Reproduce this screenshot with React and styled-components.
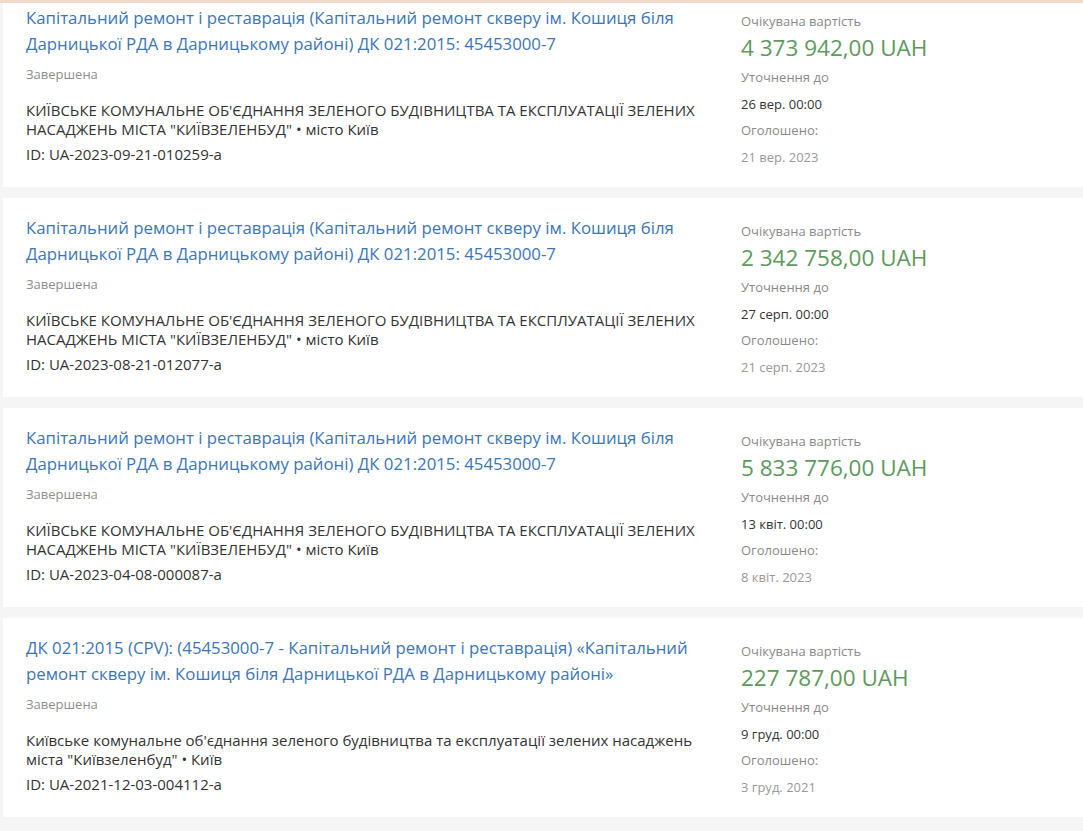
import React from "react";
import styled, { createGlobalStyle } from "styled-components";

const GlobalStyle = createGlobalStyle`
  html, body {
    margin: 0;
    padding: 0;
    background: #f5f5f5;
    font-family: "Open Sans", "Noto Sans", sans-serif;
    overflow: hidden;
  }
`;

const TopStripe = styled.div`
  position: fixed;
  top: 0;
  left: 0;
  right: 0;
  height: 3px;
  background: #efd8cc;
  z-index: 2;
`;

const List = styled.div`
  display: flex;
  flex-direction: column;
  gap: 11px;
  margin: -12px 0 0 3px;
`;

const Card = styled.div`
  display: grid;
  grid-template-columns: 700px 1fr;
  column-gap: 15px;
  background: #fff;
  padding: 17px 0 0 23px;
  height: 199px;
  box-sizing: border-box;
`;

const Main = styled.div`
  display: flex;
  flex-direction: column;
`;

const Title = styled.a`
  font-size: 16.8px;
  line-height: 26px;
  color: #3c76b8;
  text-decoration: none;
`;

const Status = styled.div`
  margin-top: 8px;
  font-size: 13px;
  line-height: 18px;
  color: #8e8e8e;
`;

const Org = styled.div`
  margin-top: 18px;
  font-size: 15px;
  line-height: 19px;
  color: #333;
`;

const Id = styled.div`
  margin-top: 6px;
  font-size: 15px;
  line-height: 19px;
  color: #333;
`;

const Side = styled.div`
  display: flex;
  flex-direction: column;
  padding-top: 7px;
`;

const Label = styled.div`
  font-size: 13px;
  line-height: 18px;
  color: #8a8a8a;
  margin-top: ${(p) => p.$mt || 0}px;
`;

const Amount = styled.div`
  margin-top: 3px;
  font-size: 22.5px;
  line-height: 30px;
  color: #5d9a5c;
`;

const DateText = styled.div`
  margin-top: 9px;
  font-size: 13px;
  line-height: 18px;
  color: ${(p) => (p.$muted ? "#999" : "#333")};
`;

const tenders = [
  {
    title:
      "Капітальний ремонт і реставрація (Капітальний ремонт скверу ім. Кошиця біля Дарницької РДА в Дарницькому районі) ДК 021:2015: 45453000-7",
    org: 'КИЇВСЬКЕ КОМУНАЛЬНЕ ОБ\'ЄДНАННЯ ЗЕЛЕНОГО БУДІВНИЦТВА ТА ЕКСПЛУАТАЦІЇ ЗЕЛЕНИХ НАСАДЖЕНЬ МІСТА "КИЇВЗЕЛЕНБУД" • місто Київ',
    id: "UA-2023-09-21-010259-a",
    amount: "4 373 942,00 UAH",
    until: "26 вер. 00:00",
    announced: "21 вер. 2023",
  },
  {
    title:
      "Капітальний ремонт і реставрація (Капітальний ремонт скверу ім. Кошиця біля Дарницької РДА в Дарницькому районі) ДК 021:2015: 45453000-7",
    org: 'КИЇВСЬКЕ КОМУНАЛЬНЕ ОБ\'ЄДНАННЯ ЗЕЛЕНОГО БУДІВНИЦТВА ТА ЕКСПЛУАТАЦІЇ ЗЕЛЕНИХ НАСАДЖЕНЬ МІСТА "КИЇВЗЕЛЕНБУД" • місто Київ',
    id: "UA-2023-08-21-012077-a",
    amount: "2 342 758,00 UAH",
    until: "27 серп. 00:00",
    announced: "21 серп. 2023",
  },
  {
    title:
      "Капітальний ремонт і реставрація (Капітальний ремонт скверу ім. Кошиця біля Дарницької РДА в Дарницькому районі) ДК 021:2015: 45453000-7",
    org: 'КИЇВСЬКЕ КОМУНАЛЬНЕ ОБ\'ЄДНАННЯ ЗЕЛЕНОГО БУДІВНИЦТВА ТА ЕКСПЛУАТАЦІЇ ЗЕЛЕНИХ НАСАДЖЕНЬ МІСТА "КИЇВЗЕЛЕНБУД" • місто Київ',
    id: "UA-2023-04-08-000087-a",
    amount: "5 833 776,00 UAH",
    until: "13 квіт. 00:00",
    announced: "8 квіт. 2023",
  },
  {
    title:
      "ДК 021:2015 (CPV): (45453000-7 - Капітальний ремонт і реставрація) «Капітальний ремонт скверу ім. Кошиця біля Дарницької РДА в Дарницькому районі»",
    org: 'Київське комунальне об\'єднання зеленого будівництва та експлуатації зелених насаджень міста "Київзеленбуд" • Київ',
    id: "UA-2021-12-03-004112-a",
    amount: "227 787,00 UAH",
    until: "9 груд. 00:00",
    announced: "3 груд. 2021",
  },
];

const TenderCard = ({ t }) => (
  <Card>
    <Main>
      <Title href="#">{t.title}</Title>
      <Status>Завершена</Status>
      <Org>{t.org}</Org>
      <Id>ID: {t.id}</Id>
    </Main>
    <Side>
      <Label>Очікувана вартість</Label>
      <Amount>{t.amount}</Amount>
      <Label $mt={5}>Уточнення до</Label>
      <DateText>{t.until}</DateText>
      <Label $mt={8}>Оголошено:</Label>
      <DateText $muted>{t.announced}</DateText>
    </Side>
  </Card>
);

export default function App() {
  return (
    <>
      <GlobalStyle />
      <TopStripe />
      <List>
        {tenders.map((t) => (
          <TenderCard key={t.id} t={t} />
        ))}
      </List>
    </>
  );
}
